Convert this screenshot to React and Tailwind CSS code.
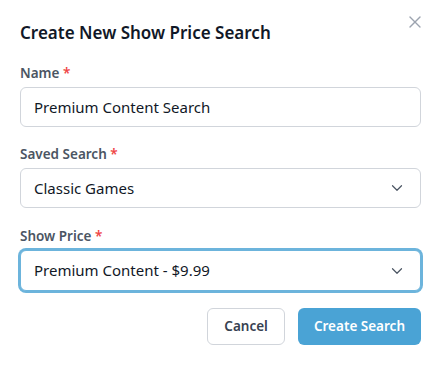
import { ChevronDown, X } from "lucide-react";

function Label({ children }) {
  return (
    <label className="block text-[13.5px] font-semibold text-[#4b5563] mb-[4px] leading-5">
      {children} <span className="text-[#ef4444]">*</span>
    </label>
  );
}

function SelectBox({ value, focused }) {
  return (
    <div
      className={`flex items-center justify-between rounded-md bg-white border pl-[13px] pr-[14px] ${
        focused ? "h-[41px] border-[#6cb4dc] ring-2 ring-[#6cb4dc]" : "h-[40px] border-[#d1d5db]"
      }`}
    >
      <span className="text-[15px] text-[#111827]">{value}</span>
      <ChevronDown size={18} strokeWidth={1.6} className="text-[#4b5563]" />
    </div>
  );
}

export default function App() {
  return (
    <div
      className="w-[441px] h-[367px] bg-white relative px-5 pt-[19px]"
      style={{ fontFamily: '"Noto Sans", "Open Sans", sans-serif' }}
    >
      <button className="absolute right-[16px] top-[12px] text-[#9ca3af]">
        <X size={20} strokeWidth={1.6} />
      </button>

      <h1 className="text-[17px] font-semibold text-[#111827] leading-7">
        Create New Show Price Search
      </h1>

      <div className="mt-[16px]">
        <div>
          <Label>Name</Label>
          <input
            type="text"
            defaultValue="Premium Content Search"
            className="w-full h-[40px] rounded-md border border-[#d1d5db] px-[13px] text-[15px] text-[#111827] outline-none"
          />
        </div>

        <div className="mt-[17px]">
          <Label>Saved Search</Label>
          <SelectBox value="Classic Games" />
        </div>

        <div className="mt-[18px]">
          <Label>Show Price</Label>
          <SelectBox value="Premium Content - $9.99" focused />
        </div>
      </div>

      <div className="flex justify-end gap-[13px] mt-[17px]">
        <button className="h-[37px] px-4 rounded-md border border-[#d1d5db] bg-white text-[13.5px] font-semibold text-[#374151]">
          Cancel
        </button>
        <button className="h-[37px] px-4 rounded-md bg-[#4aa3d5] text-[13.5px] font-semibold text-white">
          Create Search
        </button>
      </div>
    </div>
  );
}
